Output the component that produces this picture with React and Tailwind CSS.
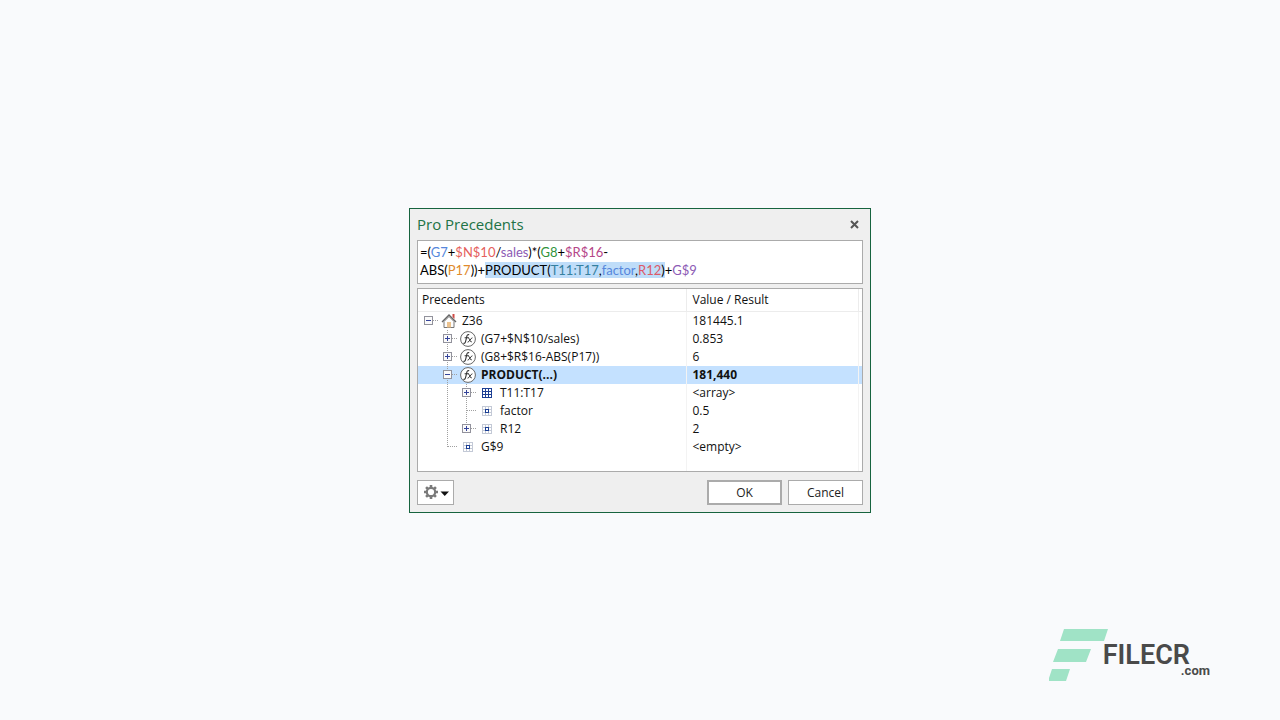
import React from "react";

const rows = [
  { guides: ["root"], icon: "home", name: "Z36", value: "181445.1" },
  { guides: ["none", "plus"], icon: "fx", name: "(G7+$N$10/sales)", value: "0.853" },
  { guides: ["none", "plus"], icon: "fx", name: "(G8+$R$16-ABS(P17))", value: "6" },
  { guides: ["none", "minus"], icon: "fx", name: "PRODUCT(...)", value: "181,440", selected: true },
  { guides: ["none", "line", "plus"], icon: "range", name: "T11:T17", value: "<array>" },
  { guides: ["none", "line", "tee"], icon: "cell", name: "factor", value: "0.5" },
  { guides: ["none", "line", "plusEnd"], icon: "cell", name: "R12", value: "2" },
  { guides: ["none", "elbow"], icon: "cell", name: "G$9", value: "<empty>" },
];

function Guide({ kind, last }) {
  const width = last ? 22 : 19;
  const box = ["root", "plus", "minus", "plusEnd"].includes(kind);
  const up = !["root", "none"].includes(kind);
  const down = ["plus", "minus", "line", "tee"].includes(kind);
  const plus = kind === "plus" || kind === "plusEnd";
  return (
    <svg width={width} height="18" viewBox={`0 0 ${width} 18`} className="shrink-0" aria-hidden="true">
      <g stroke="#a0a0a0" strokeDasharray="1 1" shapeRendering="crispEdges">
        {up && <path d="M9.5 0V9" />}
        {down && <path d="M9.5 10V18" />}
        {last && <path d="M10 8.5H20" />}
      </g>
      {box && (
        <g shapeRendering="crispEdges" fill="none">
          <rect x="5.5" y="4.5" width="8" height="8" fill="#fafafa" stroke="#92929c" />
          <path d={plus ? "M7 8.5H12M9.5 6V11" : "M7 8.5H12"} stroke="#34439a" />
        </g>
      )}
    </svg>
  );
}

function NodeIcon({ kind }) {
  const common = { width: 16, height: 18, viewBox: "0 0 16 18", className: "shrink-0", fill: "none", "aria-hidden": true };
  if (kind === "home")
    return (
      <svg {...common}>
        <path d="M11.5 2H13.5V7L11.5 5Z" fill="#cf4a45" />
        <path d="M3 9.5 8 4.5 13 9.5V15.5H3Z" fill="#fdfdfd" stroke="#777" />
        <rect x="6" y="10" width="4" height="5.5" fill="#ecc28d" />
        <path d="M1 10 8 3 15 10" stroke="#666" strokeWidth="1.4" />
      </svg>
    );
  if (kind === "fx")
    return (
      <svg {...common}>
        <circle cx="8" cy="9" r="7.4" fill="#fff" stroke="#666" />
        <path d="M3.4 13.3C4.8 13.8 5.4 12.4 5.8 10.6L6.8 6.4C7.1 5 7.7 4.2 9.2 4.8M4.6 7.8H8.8" stroke="#333" strokeWidth="1.1" />
        <path d="M8.2 8.2C9.8 7.2 9.6 12.8 11.8 11.7M12.4 7.8C10.8 7.8 9.4 12.2 7.6 12.2" stroke="#333" />
      </svg>
    );
  if (kind === "range")
    return (
      <svg {...common} shapeRendering="crispEdges">
        <rect x="3" y="4" width="10" height="10" fill="#1c3f94" />
        <path
          d="M4 5h2v2h-2zM7 5h2v2h-2zM10 5h2v2h-2zM4 8h2v2h-2zM7 8h2v2h-2zM10 8h2v2h-2zM4 11h2v2h-2zM7 11h2v2h-2zM10 11h2v2h-2z"
          fill="#fff"
        />
      </svg>
    );
  return (
    <svg {...common} shapeRendering="crispEdges">
      <path d="M3 4.5H13M3 7.5H13M3 10.5H13M3 13.5H13M3.5 4V14M6.5 4V14M9.5 4V14M12.5 4V14" stroke="#c3c9d6" />
      <rect x="6.5" y="7.5" width="3" height="3" fill="#fff" stroke="#1c3f94" />
    </svg>
  );
}

function SettingsIcon() {
  return (
    <svg width="26" height="16" viewBox="0 0 26 16" fill="none" aria-hidden="true">
      <g stroke="#7a7a7a" strokeWidth="2.6">
        <path d="M8 1V4M8 12V15M1 8H4M12 8H15M3.05 3.05 5.2 5.2M10.8 10.8 12.95 12.95M12.95 3.05 10.8 5.2M5.2 10.8 3.05 12.95" />
        <circle cx="8" cy="8" r="4.2" strokeWidth="2.2" />
      </g>
      <path d="M17.5 7.5H26L21.75 12Z" fill="#111" />
    </svg>
  );
}

function Formula() {
  return (
    <div
      role="textbox"
      aria-label="Formula"
      tabIndex={0}
      className="border border-[#ababab] bg-white px-0.5 pt-0.5 pb-1 font-['Lato','Liberation_Sans',sans-serif] text-[13px] leading-[18px] text-black"
    >
      =(<span className="text-[#5687dc]">G7</span>+<span className="text-[#e5605c]">$N$10</span>/
      <span className="text-[#8c5bb5]">sales</span>)*(<span className="text-[#31933b]">G8</span>+
      <span className="text-[#b54688]">$R$16</span>-
      <br />
      ABS(<span className="text-[#e08a2c]">P17</span>))+
      <span className="bg-[#bfddf9]">
        PRODUCT(<span className="text-[#35809f]">T11:T17</span>,<span className="text-[#5687dc]">factor</span>,
        <span className="text-[#dc5a68]">R12</span>)
      </span>
      +<span className="text-[#8c5bb5]">G$9</span>
    </div>
  );
}

function Precedents() {
  return (
    <div className="border border-[#ababab] bg-white">
      <table className="w-full table-fixed border-collapse text-left text-xs text-[#111]">
        <thead>
          <tr className="h-[22px] border-b border-[#ececec]">
            <th className="w-[268px] border-r border-[#ececec] px-1 font-normal">Precedents</th>
            <th className="border-r border-[#ececec] px-1.5 font-normal">Value / Result</th>
            <th className="w-1" aria-hidden="true" />
          </tr>
        </thead>
        <tbody>
          {rows.map((row) => (
            <tr key={row.name} className={row.selected ? "bg-[#c4e1ff] font-bold" : ""}>
              <td className="border-r border-[#f3f3f3] p-0 pl-px">
                <div className="flex h-[18px] items-center">
                  {row.guides.map((kind, i) => (
                    <Guide key={i} kind={kind} last={i === row.guides.length - 1} />
                  ))}
                  <NodeIcon kind={row.icon} />
                  <span className="pl-[5px] leading-[18px]">{row.name}</span>
                </div>
              </td>
              <td className="border-r border-[#f3f3f3] p-0 pl-1.5 leading-[18px]">{row.value}</td>
              <td className="p-0" />
            </tr>
          ))}
          <tr className="h-[15px]" aria-hidden="true">
            <td className="border-r border-[#f3f3f3] p-0" />
            <td className="border-r border-[#f3f3f3] p-0" />
            <td className="p-0" />
          </tr>
        </tbody>
      </table>
    </div>
  );
}

function Logo() {
  return (
    <div className="flex items-start font-['Roboto',sans-serif] text-[#4a4a4a]">
      <svg width="60" height="54" viewBox="0 0 60 54" fill="#a0e3c6" aria-hidden="true">
        <path d="M15 1H59L55 13H11Z M9 21H42L37 34H4Z M3 41H21L17 53H-1Z" />
      </svg>
      <div className="-ml-1.5 flex flex-col items-end pt-[17px]">
        <span className="pr-5 text-[27px] leading-5 font-semibold">FILECR</span>
        <span className="text-[13px] leading-3 font-bold">.com</span>
      </div>
    </div>
  );
}

export default function App() {
  return (
    <div className="grid min-h-screen grid-rows-[1fr_auto_1fr] bg-[#f9fafc] pt-px">
      <main className="row-start-2 w-full max-w-[462px] justify-self-center border border-[#17643f] bg-[#efefef] px-[7px] pb-[7px] font-['Open_Sans','Noto_Sans',sans-serif]">
        <header className="flex h-[31px] items-center justify-between pr-1">
          <h1 className="pb-0.5 text-[15px] leading-5 text-[#217346]">Pro Precedents</h1>
          <button type="button" aria-label="Close" className="text-[#555]">
            <svg width="9" height="9" viewBox="0 0 9 9" fill="none" stroke="currentColor" strokeWidth="2" aria-hidden="true">
              <path d="M1 1 8 8M8 1 1 8" />
            </svg>
          </button>
        </header>
        <div className="flex flex-col gap-1">
          <Formula />
          <Precedents />
        </div>
        <footer className="flex gap-1.5 pt-2 text-xs text-[#222]">
          <button type="button" aria-label="Settings" className="mr-auto flex h-[25px] w-[37px] items-center justify-center border border-[#ababab] bg-white">
            <SettingsIcon />
          </button>
          <button type="button" className="h-[25px] w-[75px] border-2 border-[#ababab] bg-white pt-px">
            OK
          </button>
          <button type="button" className="h-[25px] w-[75px] border border-[#ababab] bg-white pt-px">
            Cancel
          </button>
        </footer>
      </main>
      <div className="row-start-3 self-end justify-self-end pr-[70px] pb-[38px]">
        <Logo />
      </div>
    </div>
  );
}
